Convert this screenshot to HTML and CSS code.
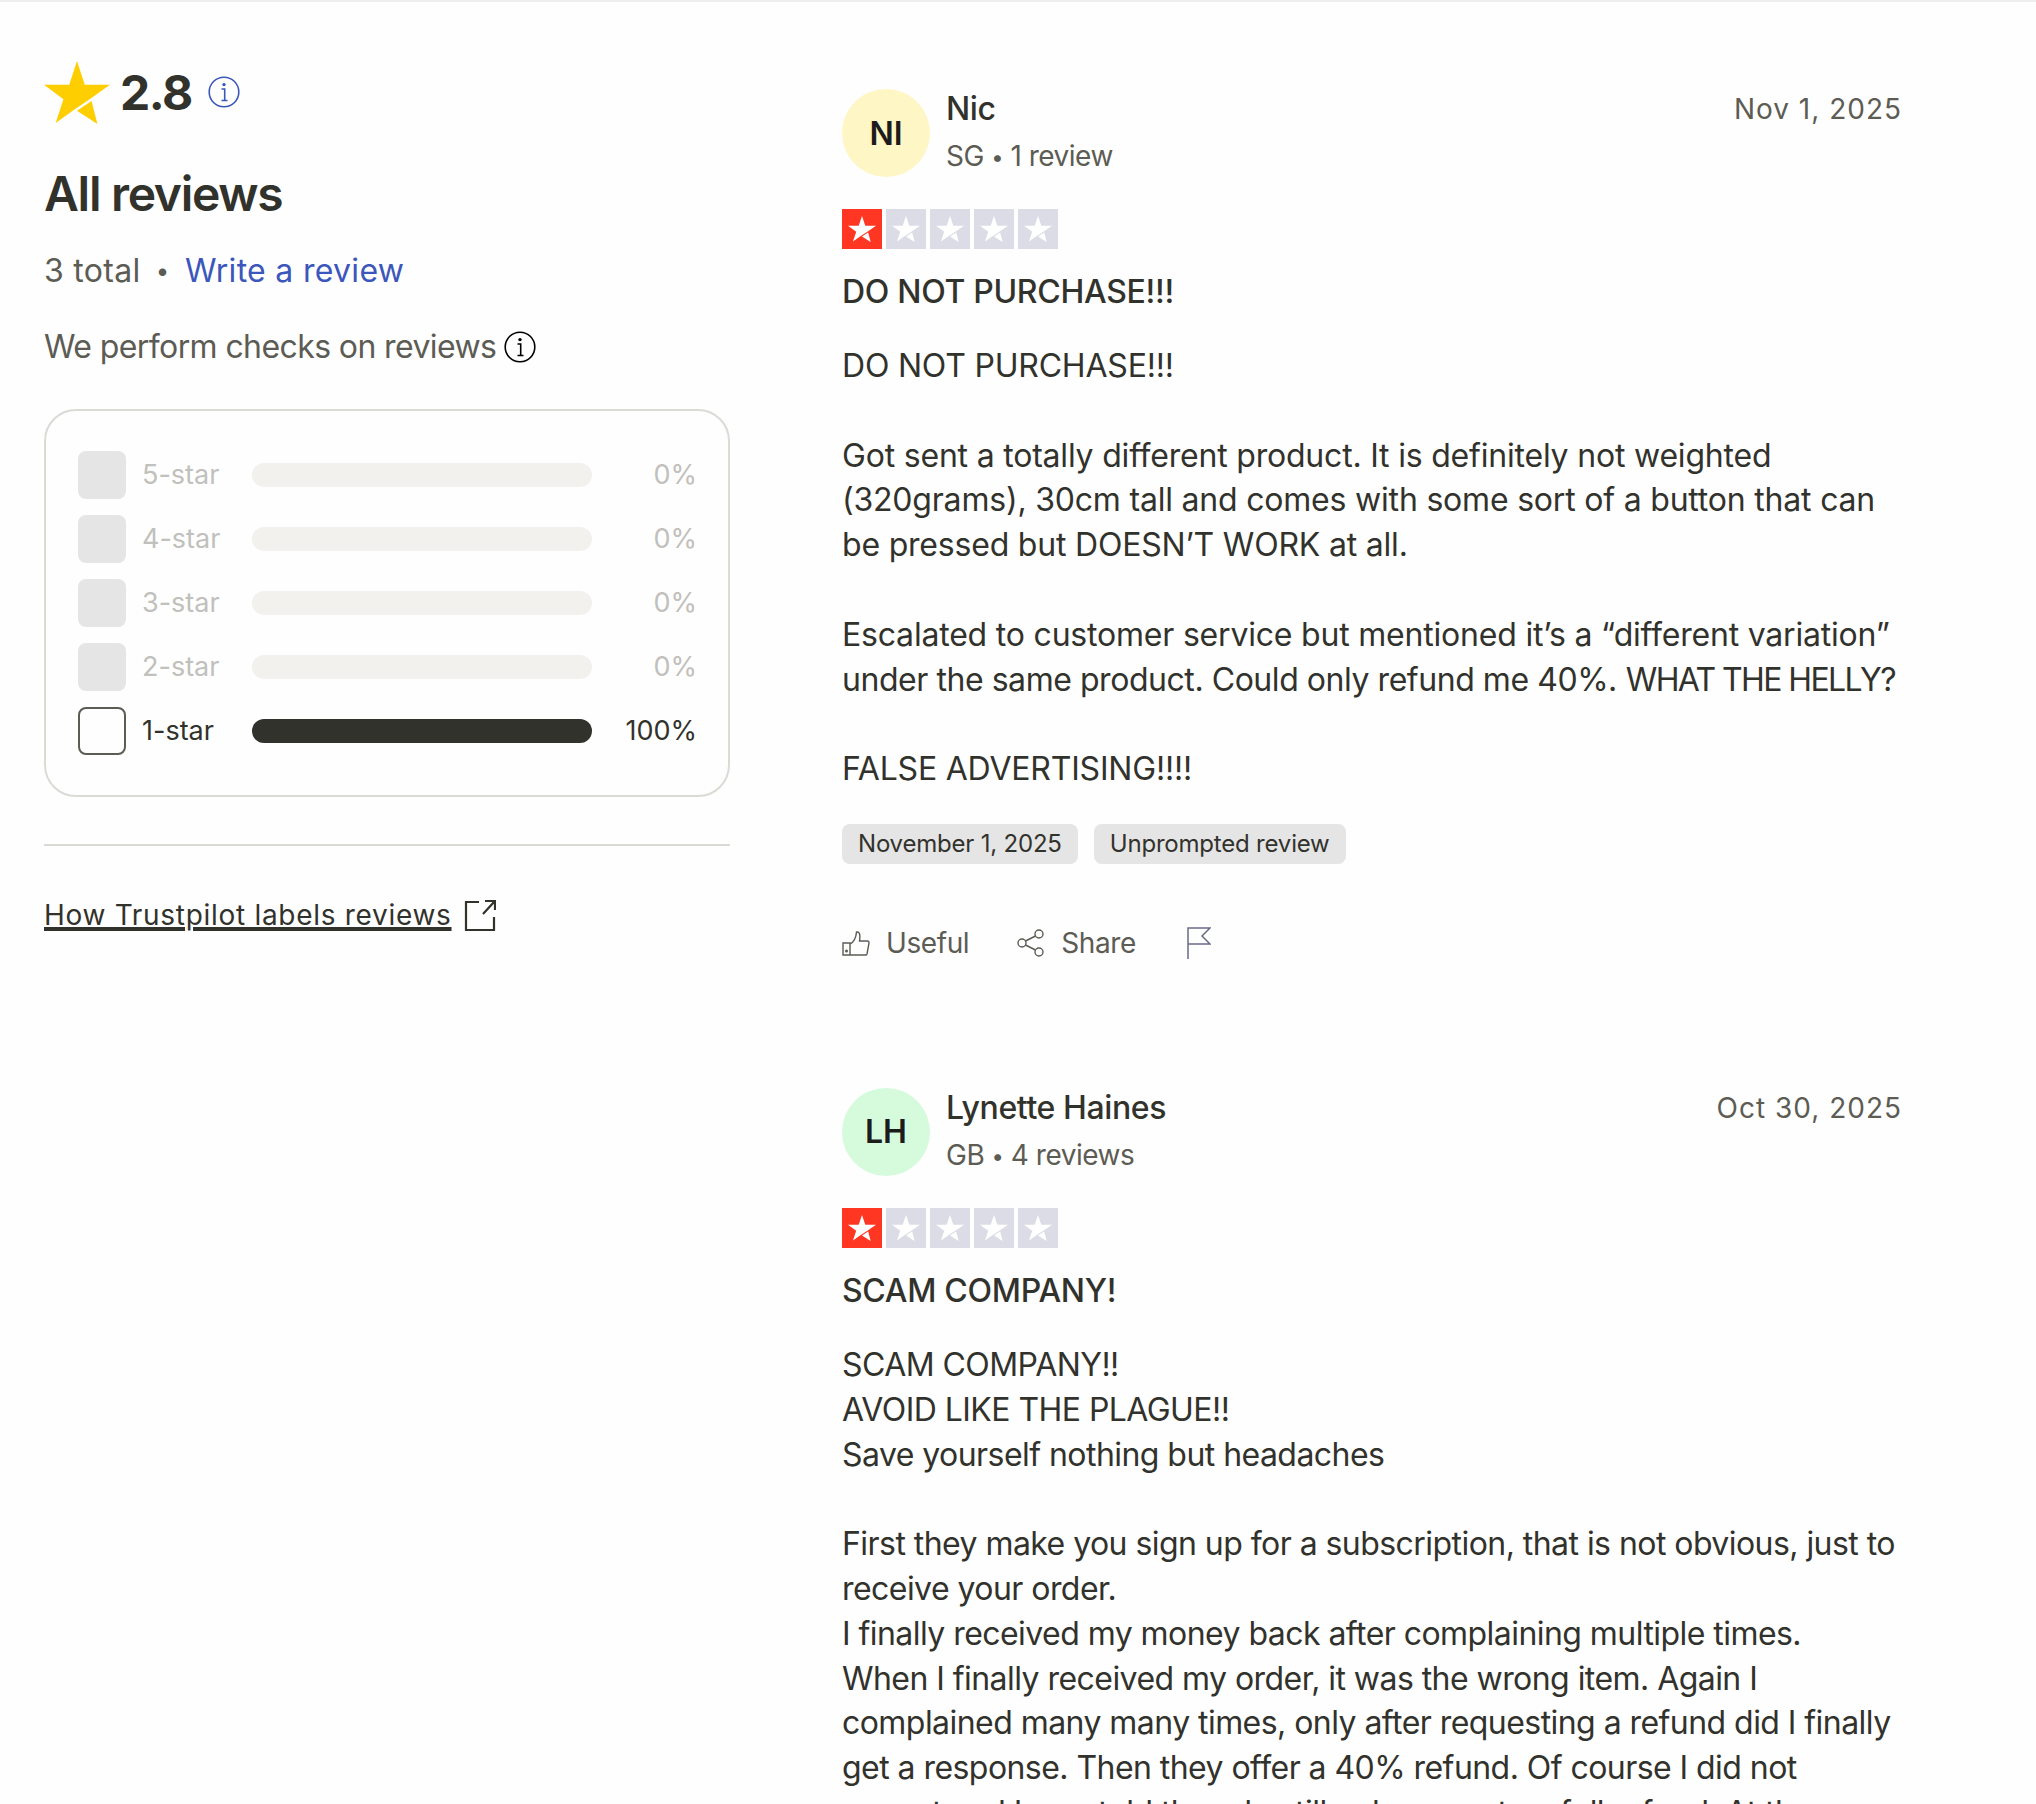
FILE: index.html
```html
<!DOCTYPE html>
<html lang="en">
<head>
  <meta charset="UTF-8" />
  <title>All reviews</title>
  <link rel="stylesheet" href="styles.css">
</head>
<body>
  <svg class="defs" width="0" height="0">
    <symbol id="tp-star" viewBox="0 0 68 66" preserveAspectRatio="none">
      <path d="M34 0l8 25h26L47 40 31 51 12 65l8-25L0 25h26z"/>
      <path d="M49 42l6 24-21-14z"/>
    </symbol>
    <symbol id="info" viewBox="0 0 32 32">
      <circle cx="16" cy="16" r="14.800" fill="none" stroke="currentColor" stroke-width="1.600"/>
      <circle cx="16" cy="8.600" r="1.700" fill="currentColor"/>
      <path d="M13.500 13h3.200v11M13.500 24.500h6" fill="none" stroke="currentColor" stroke-width="1.600"/>
    </symbol>
  </svg>

  <div class="page">
    <!-- Summary column -->
    <aside class="summary">
      <div class="score">
        <svg class="score-star"><use href="#tp-star"/></svg>
        <span class="score-value">2.8</span>
        <svg class="info-blue"><use href="#info"/></svg>
      </div>
      <h1>All reviews</h1>
      <p class="total">3 total <span class="dot">•</span> <a href="#">Write a review</a></p>
      <p class="checks">We perform checks on reviews <svg class="info-black"><use href="#info"/></svg></p>

      <div class="dist">
        <div class="dist-row off"><span class="box"></span><span class="label">5-star</span><span class="bar"></span><span class="pct">0%</span></div>
        <div class="dist-row off"><span class="box"></span><span class="label">4-star</span><span class="bar"></span><span class="pct">0%</span></div>
        <div class="dist-row off"><span class="box"></span><span class="label">3-star</span><span class="bar"></span><span class="pct">0%</span></div>
        <div class="dist-row off"><span class="box"></span><span class="label">2-star</span><span class="bar"></span><span class="pct">0%</span></div>
        <div class="dist-row"><span class="box"></span><span class="label">1-star</span><span class="bar"></span><span class="pct">100%</span></div>
      </div>

      <hr class="rule">

      <a class="labels-link" href="#">
        <span>How Trustpilot labels reviews</span>
        <svg class="ext" viewBox="0 0 32 32" fill="none" stroke="#32322d" stroke-width="2.200">
          <path d="M15 3H2v28h28V18M19 15L30 3M21 2h10v9"/>
        </svg>
      </a>
    </aside>

    <!-- Review list -->
    <main class="reviews">
      <article class="review">
        <header class="review-head">
          <div class="avatar yellow">NI</div>
          <div class="who">
            <div class="name">Nic</div>
            <div class="meta">SG <span class="sep">•</span> 1 review</div>
          </div>
          <time class="date">Nov 1, 2025</time>
        </header>
        <div class="stars">
          <span class="star on"><svg><use href="#tp-star"/></svg></span>
          <span class="star"><svg><use href="#tp-star"/></svg></span>
          <span class="star"><svg><use href="#tp-star"/></svg></span>
          <span class="star"><svg><use href="#tp-star"/></svg></span>
          <span class="star"><svg><use href="#tp-star"/></svg></span>
        </div>
        <h2>DO NOT PURCHASE!!!</h2>
        <p class="body wide">DO NOT PURCHASE!!!

Got sent a totally different product. It is definitely not weighted
(320grams), 30cm tall and comes with some sort of a button that can
be pressed but DOESN’T WORK at all.

Escalated to customer service but mentioned it’s a “different variation”
<span class="tight">under the same product. Could only refund me 40%.</span> <span class="caps">WHAT THE HELLY?</span>

FALSE ADVERTISING!!!!</p>
        <div class="tags">
          <span class="tag">November 1, 2025</span>
          <span class="tag">Unprompted review</span>
        </div>
        <div class="actions">
          <button class="action">
            <svg class="ico-thumb" viewBox="0 0 28 28" fill="none" stroke="#5c5c54" stroke-width="1.400">
              <path d="M1 14h7v12H1zM8 15c4-2 6-6 6.500-12 3-.5 4 2 3 9h8c1 0 1.500 1 1.500 2l-2 11c-.2 .7-.7 1-1.500 1H8"/>
              <circle cx="4.500" cy="22" r=".8" fill="#5c5c54"/>
            </svg>
            Useful
          </button>
          <button class="action">
            <svg class="ico-share" viewBox="0 0 28 28" fill="none" stroke="#5c5c54" stroke-width="1.400">
              <circle cx="22" cy="5" r="4"/><circle cx="5" cy="14" r="4"/><circle cx="22" cy="23" r="4"/>
              <path d="M8.500 12L18.500 7M8.500 16L18.500 21"/>
            </svg>
            Share
          </button>
          <button class="action flag">
            <svg class="ico-flag" viewBox="0 0 24 32" fill="none" stroke="#6a6a8a" stroke-width="1.500">
              <path d="M1 32V1h22l-8 8 8 8H1"/>
            </svg>
          </button>
        </div>
      </article>

      <article class="review">
        <header class="review-head">
          <div class="avatar green">LH</div>
          <div class="who">
            <div class="name">Lynette Haines</div>
            <div class="meta">GB <span class="sep">•</span> 4 reviews</div>
          </div>
          <time class="date">Oct 30, 2025</time>
        </header>
        <div class="stars">
          <span class="star on"><svg><use href="#tp-star"/></svg></span>
          <span class="star"><svg><use href="#tp-star"/></svg></span>
          <span class="star"><svg><use href="#tp-star"/></svg></span>
          <span class="star"><svg><use href="#tp-star"/></svg></span>
          <span class="star"><svg><use href="#tp-star"/></svg></span>
        </div>
        <h2>SCAM COMPANY!</h2>
        <p class="body">SCAM COMPANY!!
AVOID LIKE THE PLAGUE!!
Save yourself nothing but headaches

First they make you sign up for a subscription, that is not obvious, just to receive your order.
I finally received my money back after complaining multiple times.
When I finally received my order, it was the wrong item. Again I complained many many times, only after requesting a refund did I finally get a response. Then they offer a 40% refund. Of course I did not accept and I was told they do still only agree to a full refund. At the</p>
      </article>
    </main>
  </div>
</body>
</html>
```

FILE: styles.css
```css
* {
  box-sizing: border-box;
}

html, body {
  height: 1804px;
  overflow: hidden;
}

body {
  margin: 0;
  background-color: #fffefe;
  color: #32322d;
  font-family: "Inter", "Noto Sans", Arial, sans-serif;
  border-top: 2px solid #eeeeee;
}

.defs {
  position: absolute;
}

.page {
  display: flex;
  align-items: flex-start;
  padding: 58px 0 0 44px;
}

/* Summary column */
.summary {
  width: 686px;
  margin-right: 112px;
}

.score {
  display: flex;
  align-items: center;
  height: 64px;
}

.score-star {
  width: 66px;
  height: 63px;
  fill: #ffce00;
}

.score-value {
  margin-left: 10px;
  font-size: 48px;
  font-weight: 700;
  letter-spacing: -1.500px;
}

.info-blue {
  width: 32px;
  height: 32px;
  margin-left: 16px;
  color: #3c57bc;
}

.summary h1 {
  margin: 42px 0 0;
  font-size: 48px;
  line-height: 56px;
  font-weight: 600;
  letter-spacing: -1.300px;
}

.total {
  margin: 27px 0 0;
  font-size: 32px;
  line-height: 44px;
  color: #5c5c54;
  letter-spacing: .3px;
}

.total a {
  color: #3c57bc;
  text-decoration: none;
}

.dot {
  margin: 0 6px;
  font-size: 24px;
  line-height: 1;
  vertical-align: 3px;
}

.checks {
  display: flex;
  align-items: center;
  gap: 8px;
  margin: 32px 0 0;
  font-size: 32px;
  line-height: 44px;
  color: #5c5c54;
  letter-spacing: -.6px;
}

.info-black {
  width: 32px;
  height: 32px;
  color: #000;
}

.dist {
  display: flex;
  flex-direction: column;
  gap: 15px;
  margin-top: 40px;
  padding: 39px 31px 40px 32px;
  border: 2px solid #dcdad5;
  border-radius: 32px;
}

.dist-row {
  display: flex;
  align-items: center;
  height: 49px;
  font-size: 27px;
}

.box {
  width: 48px;
  height: 48px;
  border: 2px solid #5c5c54;
  border-radius: 8px;
}

.label {
  width: 126px;
  padding-left: 16px;
}

.bar {
  width: 340px;
  height: 24px;
  border-radius: 12px;
  background-color: #32322d;
}

.pct {
  flex: 1;
  text-align: right;
}

.off {
  color: #c0c0bc;
}

.off .box {
  border: 0;
  background-color: #e5e5e5;
}

.off .bar {
  background-color: #f3f1ed;
}

.rule {
  height: 2px;
  margin: 47px 0 0;
  border: 0;
  background-color: #dcdad5;
}

.labels-link {
  display: flex;
  align-items: center;
  gap: 12px;
  margin-top: 52px;
  color: #32322d;
  font-size: 28px;
  letter-spacing: .7px;
}

.labels-link span {
  text-decoration: underline;
  text-underline-offset: 4px;
}

.ext {
  width: 32px;
  height: 32px;
}

/* Reviews */
.reviews {
  display: flex;
  flex-direction: column;
  gap: 128px;
  width: 1060px;
  padding-top: 29px;
}

.review-head {
  display: flex;
  align-items: flex-start;
}

.avatar {
  display: flex;
  align-items: center;
  justify-content: center;
  width: 88px;
  height: 88px;
  border-radius: 50%;
  font-size: 32px;
  font-weight: 600;
  color: #1c1c1c;
}

.yellow {
  background-color: #fff6c6;
}

.green {
  background-color: #d5fbdc;
}

.who {
  flex: 1;
  margin-left: 16px;
}

.name {
  font-size: 32px;
  line-height: 40px;
  font-weight: 500;
  letter-spacing: -.4px;
}

.meta {
  margin-top: 7px;
  font-size: 28px;
  line-height: 41px;
  color: #5c5c54;
  letter-spacing: -.5px;
}

.sep {
  font-size: 22px;
  line-height: 1;
  vertical-align: 1px;
}

.date {
  font-size: 28px;
  line-height: 40px;
  color: #5c5c54;
  letter-spacing: 1px;
}

.stars {
  display: flex;
  gap: 4px;
  margin-top: 32px;
}

.star {
  display: flex;
  align-items: center;
  justify-content: center;
  width: 40px;
  height: 40px;
  background-color: #dcdce6;
}

.star.on {
  background-color: #ff3722;
}

.star svg {
  width: 28px;
  height: 26px;
  fill: #fff;
}

.review h2 {
  margin: 21px 0 0;
  font-size: 32px;
  line-height: 44px;
  font-weight: 500;
  letter-spacing: -.3px;
}

.body {
  margin: 30px 0 0;
  font-size: 32px;
  line-height: 44.800px;
  white-space: pre-line;
  letter-spacing: -.55px;
}

.wide {
  letter-spacing: -.2px;
}

.tight {
  letter-spacing: -.45px;
}

.caps {
  letter-spacing: -1.600px;
}

.tags {
  display: flex;
  gap: 16px;
  margin-top: 32px;
}

.tag {
  padding: 0 16px;
  height: 40px;
  border-radius: 8px;
  background-color: #e5e5e5;
  font-size: 24px;
  line-height: 40px;
  letter-spacing: -.2px;
}

.actions {
  display: flex;
  align-items: center;
  gap: 48px;
  margin-top: 62px;
}

.action {
  display: flex;
  align-items: center;
  gap: 16px;
  padding: 0;
  border: 0;
  background: none;
  color: #5c5c54;
  font-family: inherit;
  font-size: 28px;
  letter-spacing: -.4px;
}

.flag {
  margin-left: 3px;
}

.ico-thumb,
.ico-share {
  width: 28px;
  height: 28px;
}

.ico-flag {
  width: 24px;
  height: 32px;
}
```
